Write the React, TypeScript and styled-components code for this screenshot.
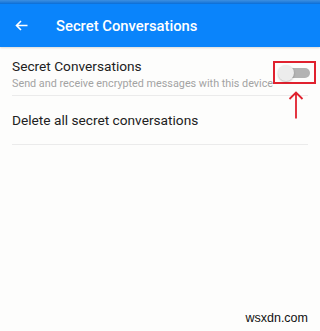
import React from "react";
import styled, { createGlobalStyle } from "styled-components";

const Global = createGlobalStyle`
  html, body { margin: 0; padding: 0; background: #fdfdfc; }
  body { font-family: Roboto, "Noto Sans", sans-serif; }
`;

const Page = styled.div`
  width: 320px;
  height: 331px;
  position: relative;
  background: #fdfdfc;
  overflow: hidden;
`;

const StatusBar = styled.div`
  height: 4px;
  background: linear-gradient(#3d8fe0, #0b6fd9);
`;

const Header = styled.header`
  height: 43px;
  background: #0a84fb;
  display: flex;
  align-items: center;
  padding-left: 15px;
  box-shadow: 0 1px 2px rgba(0, 0, 0, 0.15);
`;

const Title = styled.h1`
  margin: 0 0 0 28px;
  font-family: Roboto, sans-serif;
  font-weight: 500;
  font-size: 14.8px;
  color: #fff;
`;

const List = styled.div`
  padding: 0 12px;
`;

const Row = styled.div<{ $h: number }>`
  height: ${(p) => p.$h}px;
  box-sizing: border-box;
  border-bottom: 1px solid #ebebeb;
  display: flex;
  align-items: center;
  justify-content: space-between;
`;

const TopRow = styled(Row)`
  align-items: flex-start;
  padding-top: 11px;
`;

const TextCol = styled.div`
  display: flex;
  flex-direction: column;
  gap: 2px;
`;

const Primary = styled.div`
  font-size: 13.7px;
  color: #212121;
  line-height: 17px;
`;

const Secondary = styled.div`
  font-size: 10.8px;
  color: #a3a3a3;
  line-height: 13px;
  white-space: nowrap;
`;

const ToggleWrap = styled.div`
  position: relative;
  margin-right: -5px;
  margin-top: 3px;
`;

const Highlight = styled.div`
  width: 39px;
  height: 19px;
  border: 2px solid #e0212e;
  display: flex;
  align-items: center;
  justify-content: center;
`;

const Track = styled.div`
  position: relative;
  width: 24px;
  height: 10px;
  border-radius: 5px;
  background: #b3b3b3;
  margin-left: 6px;
`;

const Thumb = styled.div`
  position: absolute;
  left: -8px;
  top: -3px;
  width: 16px;
  height: 16px;
  border-radius: 50%;
  background: #ececec;
  box-shadow: 0 1px 2px rgba(0, 0, 0, 0.25);
`;

const Arrow = styled.svg`
  position: absolute;
  left: 15px;
  top: 30px;
`;

const Watermark = styled.div`
  position: absolute;
  right: 12px;
  bottom: 6px;
  font-family: "Liberation Sans", Arial, sans-serif;
  font-size: 12.5px;
  color: #111;
`;

export default function App() {
  return (
    <Page>
      <Global />
      <StatusBar />
      <Header>
        <svg width="13" height="11" viewBox="0 0 13 11" fill="none" stroke="#fff" strokeWidth="1.6">
          <path d="M12.5 5.5H1.5M6 1L1.5 5.5L6 10" />
        </svg>
        <Title>Secret Conversations</Title>
      </Header>
      <List>
        <TopRow $h={49}>
          <TextCol>
            <Primary>Secret Conversations</Primary>
            <Secondary>Send and receive encrypted messages with this device</Secondary>
          </TextCol>
          <ToggleWrap>
            <Highlight>
              <Track>
                <Thumb />
              </Track>
            </Highlight>
            <Arrow width="16" height="28" viewBox="0 0 16 28" fill="none" stroke="#e0212e" strokeWidth="1.8">
              <path d="M8 1.5V27.5M1.5 8L8 1.5L14.5 8" />
            </Arrow>
          </ToggleWrap>
        </TopRow>
        <Row $h={49}>
          <Primary>Delete all secret conversations</Primary>
        </Row>
      </List>
      <Watermark>wsxdn.com</Watermark>
    </Page>
  );
}
